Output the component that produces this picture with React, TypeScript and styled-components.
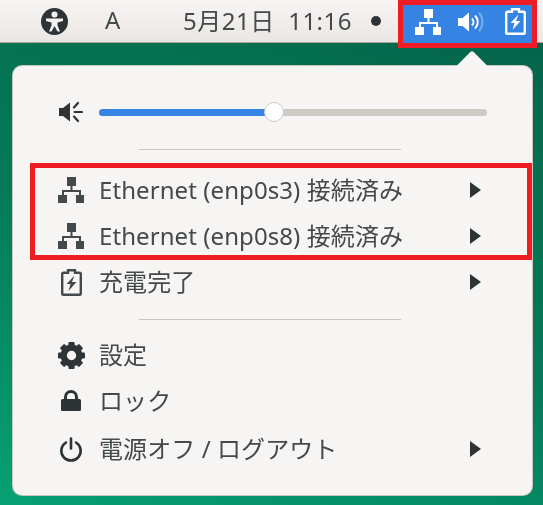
import styled, { createGlobalStyle } from 'styled-components'

const GlobalStyle = createGlobalStyle`
  html, body {
    margin: 0;
    padding: 0;
    overflow: hidden;
  }
  body {
    font-family: 'Noto Sans', 'Noto Sans CJK JP', sans-serif;
    color: #2e3436;
  }
`

const Page = styled.div`
  position: relative;
  width: 543px;
  height: 505px;
  overflow: hidden;
  background: linear-gradient(200deg, #05604a 0%, #04704f 25%, #047a58 55%, #07a173 100%);
`

const TopBar = styled.header`
  display: flex;
  align-items: stretch;
  height: 43px;
  padding-left: 41px;
  box-sizing: border-box;
  background: linear-gradient(#f7f5f4, #eae6e3);
  border-bottom: 1px solid #a9a5a0;
  color: #44494c;
  font-size: 24px;
`

const BarItem = styled.div<{ $width: number }>`
  display: flex;
  align-items: center;
  width: ${(p) => p.$width}px;
  flex: none;
  white-space: pre;
  filter: blur(0.4px);
`

const BarText = styled(BarItem)`
  padding-bottom: 3px;
  box-sizing: border-box;
`

const Clock = styled(BarText)`
  letter-spacing: 0.5px;
`

const Dot = styled.span`
  width: 10px;
  height: 10px;
  flex: none;
  border-radius: 50%;
  background: #2e3436;
`

const StatusArea = styled.div`
  display: flex;
  align-items: center;
  width: 139px;
  height: 43px;
  margin-left: 27px;
  padding-left: 17px;
  box-sizing: border-box;
  background: #3584e4;
  color: #fff;
`

const Callout = styled.div<{ $x: number; $y: number; $w: number; $h: number }>`
  position: absolute;
  left: ${(p) => p.$x}px;
  top: ${(p) => p.$y}px;
  width: ${(p) => p.$w}px;
  height: ${(p) => p.$h}px;
  box-sizing: border-box;
  border: 5px solid #ee1c25;
  pointer-events: none;
`

const Panel = styled.section`
  position: relative;
  width: 519px;
  height: 429px;
  margin: 23px 0 0 13px;
  box-sizing: border-box;
  padding-top: 33px;
  background: #f6f5f4;
  border-radius: 9px;
  box-shadow: 0 0 0 1px #c9c5bf;
  font-size: 24px;
  color: #44494c;

  &::before {
    content: '';
    position: absolute;
    left: 448px;
    top: -11px;
    width: 22px;
    height: 22px;
    background: #f6f5f4;
    transform: rotate(45deg);
    border-radius: 2px 0 0 0;
  }
`

const SliderRow = styled.div`
  display: flex;
  align-items: center;
  height: 26px;
  padding: 0 45px 0 44px;
  gap: 14px;
`

const Track = styled.div`
  position: relative;
  flex: 1;
  height: 7px;
  border-radius: 4px;
  background: #cfcac4;
`

const TrackFill = styled.div`
  height: 100%;
  border-radius: 4px 0 0 4px;
  background: #3584e4;
`

const Thumb = styled.span`
  position: absolute;
  top: 50%;
  width: 20px;
  height: 20px;
  box-sizing: border-box;
  margin: -10px 0 0 -10px;
  border-radius: 50%;
  background: #fff;
  border: 1px solid #cfcac4;
`

const Separator = styled.hr<{ $before: number; $after: number }>`
  width: 262px;
  height: 1px;
  border: 0;
  margin: ${(p) => p.$before}px 0 ${(p) => p.$after}px 126px;
  background: #c9c5c0;
`

const Row = styled.div<{ $height?: number }>`
  display: flex;
  align-items: center;
  height: ${(p) => p.$height ?? 46}px;
  padding: 0 51px 0 44px;
  gap: 14px;
`

const RowIcon = styled.span`
  display: flex;
  justify-content: center;
  width: 28px;
  flex: none;
  filter: blur(0.4px);
`

const RowLabel = styled.span`
  flex: 1;
  white-space: pre;
  padding-bottom: 3px;
  letter-spacing: 0.08px;
  filter: blur(0.4px);
`

const Arrow = styled.span`
  width: 0;
  height: 0;
  border-left: 11px solid #2e3436;
  border-top: 8px solid transparent;
  border-bottom: 8px solid transparent;
`

const NetworkIcon = () => (
  <svg width="26" height="26" viewBox="0 0 26 26" fill="currentColor">
    <rect x="9" y="0" width="9" height="9" />
    <rect x="12.500" y="8" width="2" height="6" />
    <rect x="4" y="13" width="19" height="2" />
    <rect x="4" y="14" width="2" height="5" />
    <rect x="21" y="14" width="2" height="5" />
    <rect x="0" y="18" width="9" height="8" />
    <rect x="18" y="18" width="8" height="8" />
  </svg>
)

const BatteryIcon = () => (
  <svg width="21" height="27" viewBox="0 0 21 27">
    <path d="M7 1.200h7v2.500h4.500a1.300 1.300 0 0 1 1.300 1.300v19.500a1.300 1.300 0 0 1-1.300 1.300H2.500a1.300 1.300 0 0 1-1.300-1.300V5a1.300 1.300 0 0 1 1.300-1.300H7z" fill="none" stroke="currentColor" strokeWidth="2.400" />
    <path d="M13.500 6.500 L5.500 15 H9.500 L7.500 22 L15.500 13 H11 Z" fill="currentColor" />
  </svg>
)

const AccessIcon = () => (
  <svg width="27" height="27" viewBox="0 0 27 27">
    <circle cx="13.500" cy="13.500" r="13.500" fill="#2e3436" />
    <circle cx="13.500" cy="6.500" r="3" fill="#f5f3f1" />
    <path d="M5 10.500h17v2.500l-5.500 1.500v3l2.500 6h-2.500l-3-5.500-3 5.500H8l2.500-6v-3L5 13z" fill="#f5f3f1" />
  </svg>
)

const SpeakerIcon = () => (
  <svg width="26" height="20" viewBox="0 0 26 20" fill="none" stroke="#fff">
    <path d="M0 6h4.500L11 0.500v19L4.500 14H0z" fill="#fff" stroke="none" />
    <path d="M14 6.500a5 5 0 0 1 0 7" strokeWidth="2" />
    <path d="M17 3.500a9 9 0 0 1 0 13" strokeWidth="2" />
    <path d="M21 1a13.500 13.500 0 0 1 0 18" strokeWidth="2" opacity="0.35" />
  </svg>
)

const MutedIcon = () => (
  <svg width="24" height="26" viewBox="0 0 24 26" fill="none" stroke="#2e3436" strokeWidth="2.200" strokeLinecap="round">
    <path d="M0 9h4L11 3.500v19L4 17H0z" fill="#2e3436" stroke="none" />
    <path d="M15 8.500l4-4.500M15.500 13H23M15 17.500l4 4.500" />
  </svg>
)

const GearIcon = () => (
  <svg width="27" height="27" viewBox="0 0 26 26">
    <circle cx="13" cy="13" r="7.500" fill="none" stroke="#2e3436" strokeWidth="6" />
    {[0, 45, 90, 135, 180, 225, 270, 315].map((deg) => (
      <rect key={deg} x="10" y="0" width="6" height="6" rx="1" fill="#2e3436" transform={`rotate(${deg} 13 13)`} />
    ))}
  </svg>
)

const LockIcon = () => (
  <svg width="22" height="22" viewBox="0 0 22 22">
    <path d="M5.500 10V7a5.500 5.500 0 0 1 11 0v3" fill="none" stroke="#2e3436" strokeWidth="3" />
    <rect x="1" y="9" width="20" height="12" rx="1.500" fill="#2e3436" />
  </svg>
)

const PowerIcon = () => (
  <svg width="24" height="25" viewBox="0 0 24 25" fill="none" stroke="#2e3436" strokeWidth="2.600" strokeLinecap="round">
    <path d="M7 5.500a9.700 9.700 0 1 0 10 0" />
    <path d="M12 1.500v10" />
  </svg>
)

function App() {
  return (
    <Page>
      <GlobalStyle />
      <TopBar>
        <BarItem $width={64}><AccessIcon /></BarItem>
        <BarText $width={78}>A</BarText>
        <Clock $width={188}>5月21日  11:16</Clock>
        <BarItem $width={0}><Dot /></BarItem>
        <StatusArea>
          <NetworkIcon />
          <BarItem $width={17} />
          <SpeakerIcon />
          <BarItem $width={21} />
          <BatteryIcon />
        </StatusArea>
      </TopBar>
      <Panel>
        <SliderRow>
          <RowIcon><MutedIcon /></RowIcon>
          <Track>
            <TrackFill style={{ width: '45%' }} />
            <Thumb style={{ left: '45%' }} />
          </Track>
        </SliderRow>
        <Separator $before={24} $after={17} />
        <Row>
          <RowIcon><NetworkIcon /></RowIcon>
          <RowLabel>Ethernet (enp0s3) 接続済み</RowLabel>
          <Arrow />
        </Row>
        <Row>
          <RowIcon><NetworkIcon /></RowIcon>
          <RowLabel>Ethernet (enp0s8) 接続済み</RowLabel>
          <Arrow />
        </Row>
        <Row>
          <RowIcon><BatteryIcon /></RowIcon>
          <RowLabel>充電完了</RowLabel>
          <Arrow />
        </Row>
        <Separator $before={14} $after={12} />
        <Row>
          <RowIcon><GearIcon /></RowIcon>
          <RowLabel>設定</RowLabel>
        </Row>
        <Row>
          <RowIcon><LockIcon /></RowIcon>
          <RowLabel>ロック</RowLabel>
        </Row>
        <Row $height={50}>
          <RowIcon><PowerIcon /></RowIcon>
          <RowLabel>電源オフ / ログアウト</RowLabel>
          <Arrow />
        </Row>
      </Panel>
      <Callout $x={398} $y={0} $w={139} $h={48} />
      <Callout $x={30} $y={163} $w={502} $h={97} />
    </Page>
  )
}

export default App
